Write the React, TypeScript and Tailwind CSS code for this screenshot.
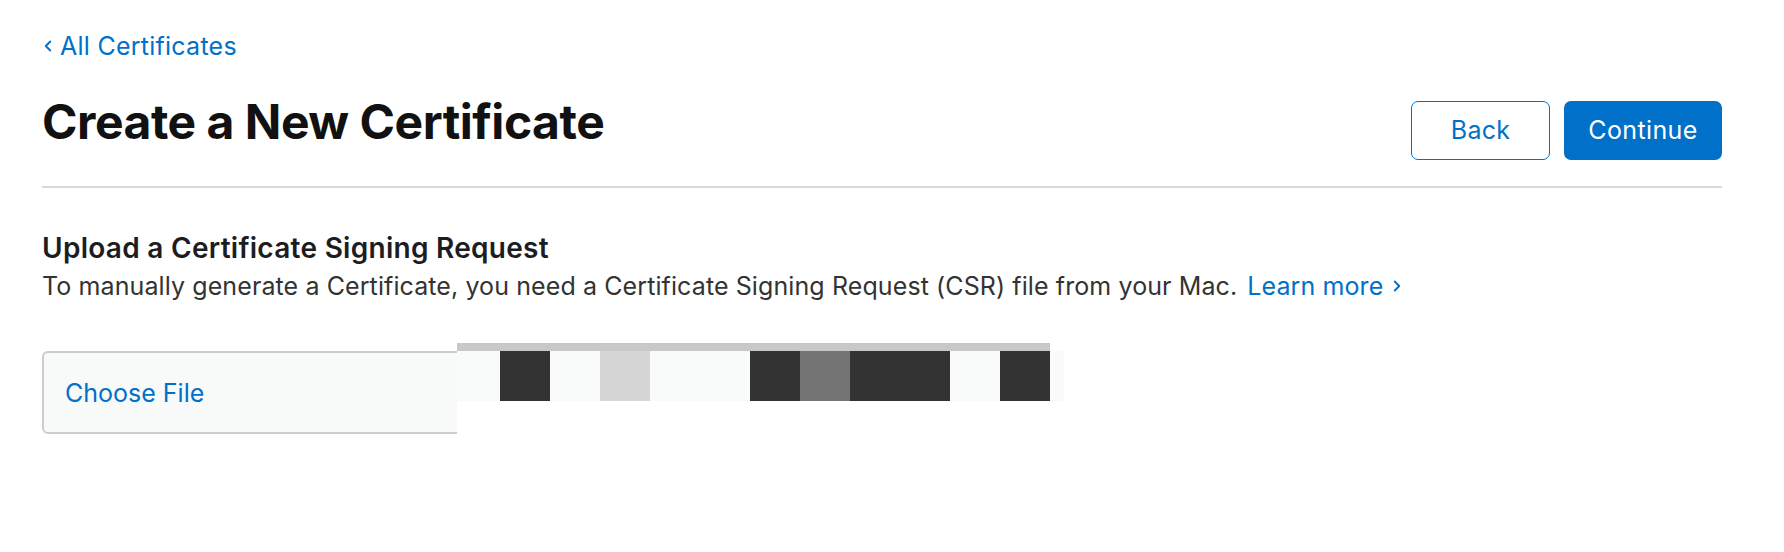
import { ChevronLeft, ChevronRight } from 'lucide-react'

// redacted strip drawn over the file input in the screenshot
const cells = ['dark', 'pale', 'light', 'pale', 'pale', 'dark', 'gray', 'dark', 'dark', 'pale', 'dark']

const cellClass: Record<string, string> = {
  pale: 'bg-[#f9fafa]',
  dark: 'bg-[#333333]',
  gray: 'bg-[#737473]',
  light: 'bg-[#d6d6d6]',
}

function Redaction() {
  return (
    <div className="absolute left-[415px] top-[-8px] w-[607px] h-[94px] bg-white">
      <div className="w-[593px] h-[8px] bg-[#c8c8c8]" />
      <div className="flex h-[50px] bg-[#f9fafa]">
        <div className="w-[43px]" />
        {cells.map((c, i) => (
          <div key={i} className={`w-[50px] ${cellClass[c]}`} />
        ))}
      </div>
    </div>
  )
}

export default function App() {
  return (
    <div className="w-[1784px] h-[552px] bg-white font-['Inter',sans-serif] antialiased">
      <div className="w-[1680px] ml-[42px] pt-[30px]">
        <a className="flex items-center text-[25px] leading-[32px] text-[#0070c9]">
          <ChevronLeft size={18} strokeWidth={2.5} className="-ml-[3px] mr-[3px]" />
          <span className="tracking-[0.01em]">All Certificates</span>
        </a>

        <div className="flex items-start justify-between mt-[32px]">
          <h1 className="text-[48px] leading-[56px] font-bold text-[#111111] tracking-[-0.01em]">
            Create a New Certificate
          </h1>
          <div className="flex gap-[14px] mt-[7px]">
            <button className="w-[139px] h-[59px] rounded-[7px] border-[1.5px] border-[#0070c9] bg-white text-[25px] tracking-[0.01em] text-[#0070c9]">
              Back
            </button>
            <button className="w-[158px] h-[59px] rounded-[7px] bg-[#0070c9] text-[25px] tracking-[0.015em] text-white">
              Continue
            </button>
          </div>
        </div>

        <div className="h-[2px] bg-[#d9d9d9] mt-[26px]" />

        <h2 className="mt-[44px] text-[28px] leading-[32px] font-semibold text-[#1d1d1f] tracking-[0.01em]">
          Upload a Certificate Signing Request
        </h2>
        <p className="mt-[6px] text-[25px] leading-[32px] text-[#333333] tracking-[0.004em]">
          To manually generate a Certificate, you need a Certificate Signing Request (CSR) file from your Mac.
          <a className="inline-flex items-center ml-[10px] text-[#0070c9]">
            Learn more
            <ChevronRight size={18} strokeWidth={2.5} className="ml-[5px]" />
          </a>
        </p>

        <div className="relative mt-[49px] w-[1000px]">
          <div className="h-[83px] rounded-[6px] border-2 border-[#cccccc] bg-[#f8f9f9] flex items-center px-[21px] pt-[2px]">
            <span className="text-[25px] text-[#0070c9]">Choose File</span>
          </div>
          <Redaction />
        </div>
      </div>
    </div>
  )
}
